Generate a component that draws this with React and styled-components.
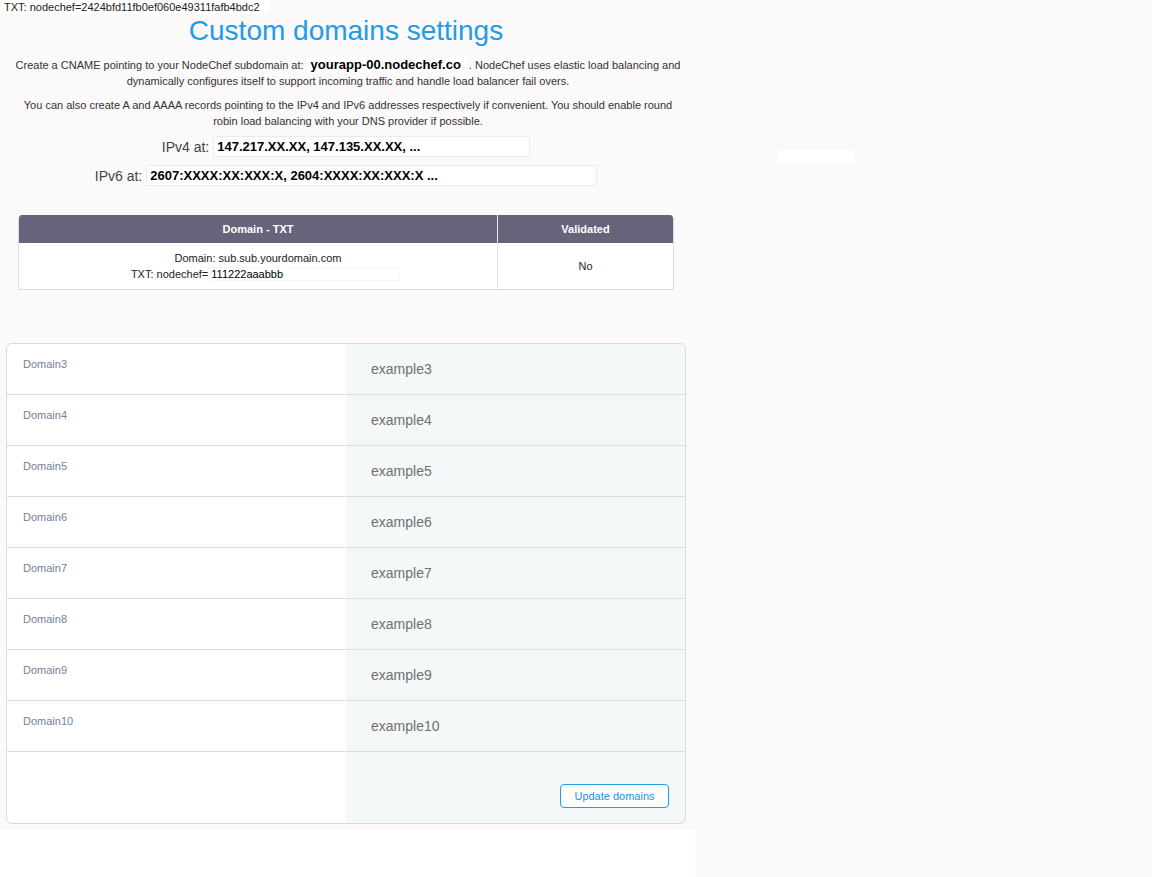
import styled, { createGlobalStyle } from "styled-components"

const GlobalStyle = createGlobalStyle`
  html, body {
    margin: 0;
    padding: 0;
    background: #fbf9fa;
    font-family: "Liberation Sans", Arial, sans-serif;
  }
`

const Page = styled.div`
  position: relative;
  min-height: 877px;
`

const TxtBar = styled.div`
  width: 270px;
  height: 14px;
  background: #fff;
  font-size: 11px;
  line-height: 14px;
  color: #222;
  padding-left: 4px;
  box-sizing: border-box;
  white-space: nowrap;
`

const Main = styled.div`
  width: 696px;
  display: flex;
  flex-direction: column;
  align-items: center;
`

const Title = styled.h1`
  margin: 0;
  margin-top: 1px;
  margin-left: -4px;
  font-size: 28px;
  font-weight: normal;
  line-height: 32px;
  color: #1e9bea;
`

const Para = styled.p`
  margin: ${p => p.$top || 8}px 0 0;
  width: ${p => p.$w}px;
  text-align: center;
  font-size: 11px;
  line-height: 16px;
  color: #333;
`

const Sub = styled.span`
  line-height: 14px;
  background: #fff;
  color: #000;
  font-weight: bold;
  font-size: 13px;
  padding: 0 8px 0 4px;
`

const IpRow = styled.div`
  display: flex;
  align-items: center;
  gap: 4px;
  margin-top: ${p => p.$top}px;
  margin-left: -4px;
`

const IpLabel = styled.span`
  font-size: 14px;
  color: #444;
`

const IpBox = styled.div`
  width: ${p => p.$w}px;
  height: 21px;
  box-sizing: border-box;
  background: #fff;
  border: 1px solid #ecebec;
  font-size: 13px;
  font-weight: bold;
  color: #000;
  padding-left: 3px;
  line-height: 19px;
  white-space: nowrap;
`

const Table = styled.div`
  margin-top: 29px;
  align-self: flex-start;
  margin-left: 18px;
  width: 656px;
  box-sizing: border-box;
  border: 1px solid #dcdcdc;
  border-top: none;
  border-radius: 4px 4px 0 0;
  overflow: hidden;
  background: #fff;
`

const HeadRow = styled.div`
  display: grid;
  grid-template-columns: 479px 1fr;
  background: #67637a;
  height: 28px;
`

const HeadCell = styled.div`
  color: #fff;
  font-size: 11px;
  font-weight: bold;
  display: flex;
  align-items: center;
  justify-content: center;
  border-right: ${p => (p.$sep ? "1px solid #e6e6e6" : "none")};
`

const BodyRow = styled.div`
  display: grid;
  grid-template-columns: 479px 1fr;
  height: 46px;
`

const BodyCell = styled.div`
  font-size: 11px;
  color: #222;
  display: flex;
  flex-direction: column;
  align-items: center;
  justify-content: center;
  line-height: 16px;
  border-right: ${p => (p.$sep ? "1px solid #e0e0e0" : "none")};
`

const TxtLine = styled.div`
  white-space: nowrap;
  margin-left: 14px;
`

const TxtValue = styled.span`
  background: #fff;
  color: #000;
  padding-right: 116px;
  box-shadow: 0 0 0 1px #f8f6f7;
`

const Card = styled.div`
  margin-top: 53px;
  align-self: flex-start;
  margin-left: 6px;
  width: 680px;
  box-sizing: border-box;
  border: 1px solid #dadada;
  border-radius: 6px;
  overflow: hidden;
  background: linear-gradient(to right, #fff 339px, #f5f8f9 339px);
`

const DomainRow = styled.div`
  display: grid;
  grid-template-columns: 339px 1fr;
  height: ${p => p.$h || 51}px;
  border-bottom: ${p => (p.$last ? "none" : "1px solid #dedede")};
  box-sizing: border-box;
`

const DomainName = styled.div`
  padding: 14px 0 0 16px;
  font-size: 11px;
  color: #737f99;
`

const DomainValue = styled.div`
  display: flex;
  align-items: center;
  padding-left: 25px;
  font-size: 14px;
  color: #707070;
`

const ButtonCell = styled.div`
  display: flex;
  justify-content: flex-end;
  align-items: flex-end;
  padding: 0 16px 15px 0;
`

const UpdateButton = styled.button`
  height: 24px;
  width: 109px;
  background: #fff;
  border: 1px solid #1e9bea;
  border-radius: 4px;
  color: #1e8ee0;
  font-family: "Liberation Sans", Arial, sans-serif;
  font-size: 11px;
  cursor: pointer;
`

const WhiteFoot = styled.div`
  width: 696px;
  height: 47px;
  margin-top: 6px;
  background: #fff;
`

const FloatPatch = styled.div`
  position: absolute;
  left: 778px;
  top: 150px;
  width: 76px;
  height: 13px;
  background: #fff;
`

const domains = [3, 4, 5, 6, 7, 8, 9, 10]

const App = () => {
  return (
    <>
      <GlobalStyle />
      <Page>
        <TxtBar>TXT: nodechef=2424bfd11fb0ef060e49311fafb4bdc2</TxtBar>
        <FloatPatch />
        <Main>
          <Title>Custom domains settings</Title>
          <Para $top={10} $w={680}>
            Create a CNAME pointing to your NodeChef subdomain at: <Sub>yourapp-00.nodechef.co</Sub>. NodeChef uses
            elastic load balancing and dynamically configures itself to support incoming traffic and handle load
            balancer fail overs.
          </Para>
          <Para $w={666}>
            You can also create A and AAAA records pointing to the IPv4 and IPv6 addresses respectively if convenient.
            You should enable round robin load balancing with your DNS provider if possible.
          </Para>
          <IpRow $top={7}>
            <IpLabel>IPv4 at:</IpLabel>
            <IpBox $w={317}>147.217.XX.XX, 147.135.XX.XX, ...</IpBox>
          </IpRow>
          <IpRow $top={8}>
            <IpLabel>IPv6 at:</IpLabel>
            <IpBox $w={451}>2607:XXXX:XX:XXX:X, 2604:XXXX:XX:XXX:X ...</IpBox>
          </IpRow>
          <Table>
            <HeadRow>
              <HeadCell $sep>Domain - TXT</HeadCell>
              <HeadCell>Validated</HeadCell>
            </HeadRow>
            <BodyRow>
              <BodyCell $sep>
                <div>Domain: sub.sub.yourdomain.com</div>
                <TxtLine>
                  TXT: nodechef= <TxtValue>111222aaabbb</TxtValue>
                </TxtLine>
              </BodyCell>
              <BodyCell>No</BodyCell>
            </BodyRow>
          </Table>
          <Card>
            {domains.map(n => (
              <DomainRow key={n}>
                <DomainName>Domain{n}</DomainName>
                <DomainValue>example{n}</DomainValue>
              </DomainRow>
            ))}
            <DomainRow $h={71} $last>
              <div />
              <ButtonCell>
                <UpdateButton>Update domains</UpdateButton>
              </ButtonCell>
            </DomainRow>
          </Card>
          <WhiteFoot />
        </Main>
      </Page>
    </>
  )
}

export default App
